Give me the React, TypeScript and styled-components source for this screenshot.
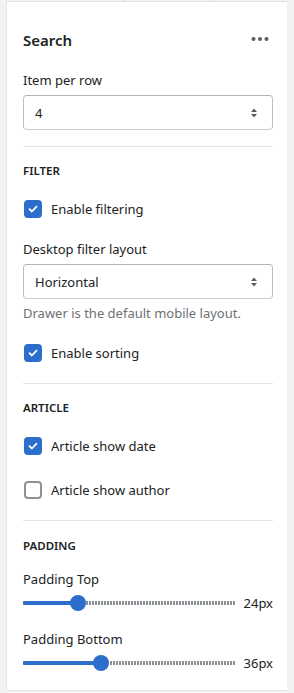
import styled, { createGlobalStyle } from "styled-components";

const GlobalStyle = createGlobalStyle`
  body {
    margin: 0;
    background: #f1f2f3;
    font-family: "Noto Sans", "Open Sans", sans-serif;
    color: #202223;
  }
`;

const Page = styled.div`
  display: flex;
  min-height: 693px;
  padding-left: 6px;
`;

const Panel = styled.div`
  width: 281px;
  background: #ffffff;
  border-left: 1px solid #e3e4e6;
  border-top: 1px solid #e1e3e5;
  border-bottom: 1px solid #e1e3e5;
  box-sizing: border-box;
  height: 690px;
  margin-top: 1px;
  padding: 28px 14px 0 16px;
  position: relative;
`;

const TopTicks = styled.div`
  position: absolute;
  top: -2px;
  left: 117px;
  width: 88px;
  height: 2px;
  border-left: 1px solid #d5d7da;
  border-right: 1px solid #d5d7da;
`;

const Header = styled.div`
  display: flex;
  align-items: center;
  justify-content: space-between;
  height: 20px;
`;

const Title = styled.div`
  font-size: 15px;
  font-weight: 600;
  line-height: 20px;
`;

const Label = styled.div<{ $top?: number }>`
  font-size: 13px;
  line-height: 20px;
  margin-top: ${(p) => p.$top ?? 0}px;
`;

const Heading = styled.div<{ $top?: number }>`
  font-size: 11.5px;
  font-weight: 600;
  line-height: 16px;
  text-transform: uppercase;
  margin-top: ${(p) => p.$top ?? 0}px;
`;

const Help = styled.div`
  font-size: 13px;
  line-height: 20px;
  color: #6d7175;
  margin-top: 4px;
`;

const Select = styled.div<{ $top?: number }>`
  margin-top: ${(p) => p.$top ?? 0}px;
  height: 35px;
  box-sizing: border-box;
  border: 1px solid #babfc3;
  border-top-color: #aeb4b9;
  border-bottom-color: #c9cccf;
  border-radius: 4px;
  display: flex;
  align-items: center;
  justify-content: space-between;
  padding: 0 14px 0 11px;
  font-size: 13px;
`;

const Divider = styled.hr<{ $top: number }>`
  border: none;
  border-top: 1px solid #e1e3e5;
  margin: ${(p) => p.$top}px 0 0;
`;

const CheckRow = styled.label<{ $top: number }>`
  display: flex;
  align-items: center;
  gap: 9px;
  height: 20px;
  margin-top: ${(p) => p.$top}px;
  font-size: 13px;
`;

const Box = styled.span<{ $on: boolean }>`
  width: 18px;
  height: 18px;
  box-sizing: border-box;
  margin-left: 1px;
  border-radius: 4px;
  display: flex;
  align-items: center;
  justify-content: center;
  background: ${(p) => (p.$on ? "#2c6ecb" : "#ffffff")};
  border: ${(p) => (p.$on ? "none" : "2px solid #8c9196")};
`;

const SliderRow = styled.div`
  display: flex;
  align-items: center;
  height: 20px;
  margin-top: 4px;
`;

const Track = styled.div`
  position: relative;
  width: 212px;
  height: 20px;
`;

const Rail = styled.div`
  position: absolute;
  left: 0;
  right: 0;
  top: 8px;
  height: 4px;
  background: repeating-linear-gradient(
    90deg,
    #8c9196 0 2px,
    transparent 2px 3px
  );
`;

const Fill = styled.div`
  position: absolute;
  left: 0;
  top: 8px;
  height: 4px;
  border-radius: 2px;
  background: #2c6ecb;
`;

const Thumb = styled.div`
  position: absolute;
  top: 2px;
  width: 16px;
  height: 16px;
  margin-left: -8px;
  border-radius: 50%;
  background: #2c6ecb;
`;

const Value = styled.span`
  margin-left: 9px;
  font-size: 13px;
`;

const Check = () => (
  <svg width="12" height="12" viewBox="0 0 12 12">
    <path d="M2.5 6.2l2.4 2.3 4.6-4.9" fill="none" stroke="#fff" strokeWidth="1.8" strokeLinecap="round" strokeLinejoin="round" />
  </svg>
);

const Arrows = () => (
  <svg width="8" height="12" viewBox="0 0 8 12">
    <path d="M4 1.5L7 5H1z M4 10.5L1 7h6z" fill="#5c5f62" />
  </svg>
);

const Dots = () => (
  <svg width="18" height="6" viewBox="0 0 18 6" style={{ marginRight: 4, marginTop: -2 }}>
    <circle cx="2.5" cy="3" r="2" fill="#5c5f62" />
    <circle cx="9" cy="3" r="2" fill="#5c5f62" />
    <circle cx="15.5" cy="3" r="2" fill="#5c5f62" />
  </svg>
);

const Checkbox = ({ label, on, top }: { label: string; on: boolean; top: number }) => (
  <CheckRow $top={top}>
    <Box $on={on}>{on && <Check />}</Box>
    {label}
  </CheckRow>
);

const Range = ({ pos, value }: { pos: number; value: string }) => (
  <SliderRow>
    <Track>
      <Rail />
      <Fill style={{ width: pos }} />
      <Thumb style={{ left: pos }} />
    </Track>
    <Value>{value}</Value>
  </SliderRow>
);

export default function App() {
  return (
    <>
      <GlobalStyle />
      <Page>
        <Panel>
          <TopTicks />
          <Header>
            <Title>Search</Title>
            <Dots />
          </Header>
          <Label $top={20}>Item per row</Label>
          <Select $top={5}>
            <span>4</span>
            <Arrows />
          </Select>
          <Divider $top={16} />

          <Heading $top={16}>Filter</Heading>
          <Checkbox label="Enable filtering" on top={20} />
          <Label $top={20}>Desktop filter layout</Label>
          <Select $top={5}>
            <span>Horizontal</span>
            <Arrows />
          </Select>
          <Help>Drawer is the default mobile layout.</Help>
          <Checkbox label="Enable sorting" on top={20} />
          <Divider $top={20} />

          <Heading $top={16}>Article</Heading>
          <Checkbox label="Article show date" on top={20} />
          <Checkbox label="Article show author" on={false} top={24} />
          <Divider $top={20} />

          <Heading $top={17}>Padding</Heading>
          <Label $top={15}>Padding Top</Label>
          <Range pos={55} value="24px" />
          <Label $top={16}>Padding Bottom</Label>
          <Range pos={78} value="36px" />
        </Panel>
      </Page>
    </>
  );
}
